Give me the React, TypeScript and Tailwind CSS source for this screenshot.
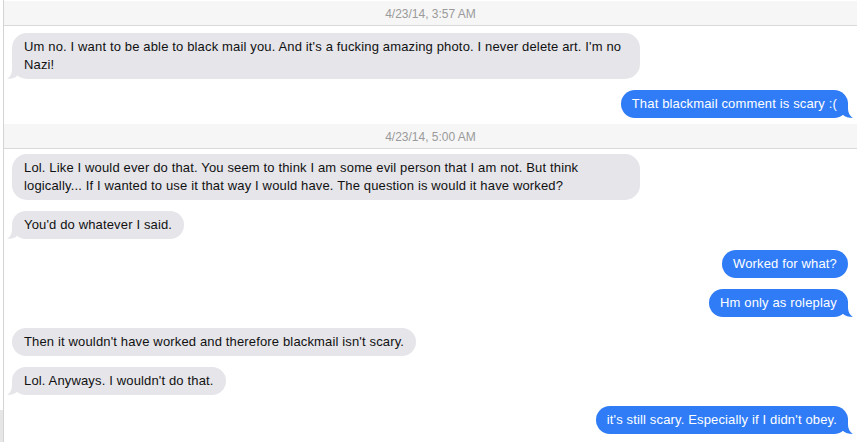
import React from "react";

type Msg = { from: "them" | "me"; text: string; tail?: boolean };

const GRAY = "#e5e5ea";
const BLUE = "#2f7cf6";

function LeftTail() {
  return (
    <svg
      className="absolute bottom-0 left-[-5px]"
      width="14"
      height="16"
      viewBox="0 0 14 16"
    >
      <path d="M5 0 L5 6 C5 11 3 14 0 16 C4 16 8 15 11 12 L14 12 L14 0 Z" fill={GRAY} />
    </svg>
  );
}

function RightTail() {
  return (
    <svg
      className="absolute bottom-0 right-[-5px]"
      width="14"
      height="16"
      viewBox="0 0 14 16"
    >
      <path d="M9 0 L9 6 C9 11 11 14 14 16 C10 16 6 15 3 12 L0 12 L0 0 Z" fill={BLUE} />
    </svg>
  );
}

function Bubble({ m }: { m: Msg }) {
  if (m.from === "them") {
    return (
      <div className="flex justify-start">
        <div className="relative max-w-[628px] rounded-[15px] bg-[#e5e5ea] px-[12px] py-[5px] text-[13px] leading-[18px] tracking-[0.15px] text-[#111]">
          {m.tail && <LeftTail />}
          <span className="relative">{m.text}</span>
        </div>
      </div>
    );
  }
  return (
    <div className="flex justify-end">
      <div className="relative max-w-[628px] rounded-[15px] bg-[#2f7cf6] px-[11px] py-[5px] text-[13px] leading-[18px] tracking-[0.15px] text-white">
        {m.tail && <RightTail />}
        <span className="relative">{m.text}</span>
      </div>
    </div>
  );
}

function Header({ text }: { text: string }) {
  return (
    <div className="flex h-[25px] items-center justify-center border-b border-[#d9d9d9] bg-[#f6f6f6] pt-[1px] text-[12px] text-[#9a9a9a]">
      {text}
    </div>
  );
}

export default function App() {
  const group1: Msg[] = [
    {
      from: "them",
      text: "Um no. I want to be able to black mail you. And it's a fucking amazing photo. I never delete art. I'm no Nazi!",
      tail: true,
    },
    { from: "me", text: "That blackmail comment is scary :(", tail: true },
  ];
  const group2: Msg[] = [
    {
      from: "them",
      text: "Lol. Like I would ever do that. You seem to think I am some evil person that I am not. But think logically... If I wanted to use it that way I would have. The question is would it have worked?",
    },
    { from: "them", text: "You'd do whatever I said.", tail: true },
    { from: "me", text: "Worked for what?" },
    { from: "me", text: "Hm only as roleplay", tail: true },
    { from: "them", text: "Then it wouldn't have worked and therefore blackmail isn't scary." },
    { from: "them", text: "Lol. Anyways. I wouldn't do that.", tail: true },
    { from: "me", text: "it's still scary. Especially if I didn't obey.", tail: true },
  ];
  return (
    <div
      className="flex h-[442px] w-[857px] overflow-hidden bg-white"
      style={{ fontFamily: '"Liberation Sans", Arial, sans-serif' }}
    >
      <div className="flex w-[3px] flex-col">
        <div className="flex-1" />
        <div className="h-[32px] bg-[#e6e6e6]" />
      </div>
      <div className="flex min-w-0 flex-1 flex-col border-l border-[#d4d4d4]">
        <div className="h-[1px]" />
        <Header text="4/23/14, 3:57 AM" />
        <div className="flex flex-col gap-[11px] pb-[6px] pl-[8px] pr-[9px] pt-[7px]">
          {group1.map((m, i) => (
            <Bubble key={i} m={m} />
          ))}
        </div>
        <Header text="4/23/14, 5:00 AM" />
        <div className="flex flex-col gap-[11px] pl-[8px] pr-[9px] pt-[5px]">
          {group2.map((m, i) => (
            <Bubble key={i} m={m} />
          ))}
        </div>
      </div>
    </div>
  );
}
